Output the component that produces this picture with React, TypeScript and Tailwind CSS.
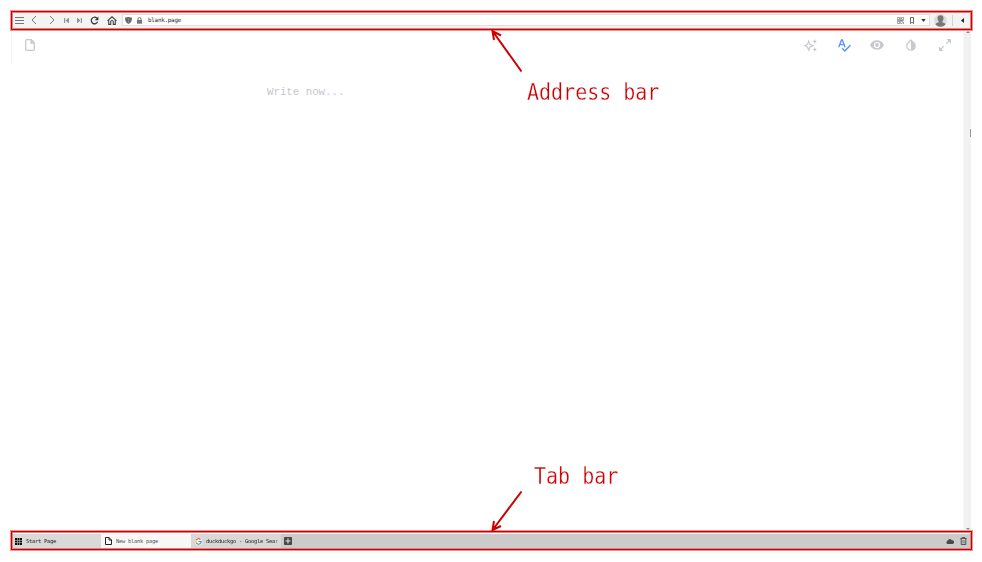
import type { ReactNode } from "react";

const mono = "font-['DejaVu_Sans_Mono',monospace]";

function Icon({ w, h, box, className = "", children }: { w: number; h: number; box: string; className?: string; children: ReactNode }) {
  return (
    <svg width={w} height={h} viewBox={box} className={`block shrink-0 ${className}`} fill="none" stroke="currentColor">
      {children}
    </svg>
  );
}

function Frame({ children, className = "" }: { children: ReactNode; className?: string }) {
  return (
    <div className={`h-[21px] w-[963px] shrink-0 border border-[#ee9292] ${className}`}>
      <div className="h-full border border-[#cc0000]">
        <div className="flex h-full items-stretch border border-[#e08080]">{children}</div>
      </div>
    </div>
  );
}

function AddressBar() {
  return (
    <Frame className="bg-[#f3f3f3]">
      <div className="flex w-[109px] shrink-0 items-center pb-px pl-[2px] text-[#777]">
        <Icon w={9} h={8} box="0 0 9 8" className="text-[#777]"><path d="M0 1.500h9M0 4.500h9M0 7.500h9" strokeWidth="1.200" /></Icon>
        <Icon w={6} h={10} box="0 0 6 10" className="ml-[7px]"><path d="M5 1L1 5l4 4" /></Icon>
        <Icon w={6} h={10} box="0 0 6 10" className="ml-[12px]"><path d="M1 1l4 4-4 4" /></Icon>
        <Icon w={5} h={7} box="0 0 6 7" className="ml-[9px] text-[#8c8c8c]"><path d="M.8.5v6" strokeWidth="1.300" /><path d="M5.500.5v6L2 3.500z" fill="currentColor" stroke="none" /><path d="M5.300.5v6" /></Icon>
        <Icon w={5} h={7} box="0 0 6 7" className="ml-[8px] text-[#8c8c8c]"><path d="M5.200.5v6" strokeWidth="1.300" /><path d="M.5.5v6L4 3.500z" fill="currentColor" stroke="none" /><path d="M.7.5v6" /></Icon>
        <Icon w={9} h={9} box="0 0 9 9" className="ml-[8px] text-[#333]"><path d="M6.800 2.100A3.300 3.300 0 1 0 7.600 5.800" strokeWidth="1.200" /><path d="M8.400.5v3.700H4.700z" fill="currentColor" stroke="none" /></Icon>
        <Icon w={10} h={9} box="0 0 10 9" className="ml-[8px] text-[#444]"><path d="M.5 4.800L5 .8l4.500 4M1.700 4v4.400h2V5.800a1.300 1.300 0 0 1 2.600 0v2.600h2V4" strokeWidth="1.100" /></Icon>
      </div>
      <div className="mt-px mb-[2px] flex w-[808px] shrink-0 items-center border border-[#dedede] bg-white pl-[2px]">
        <Icon w={7} h={7} box="0 0 7 7" className="text-[#686868]"><path d="M0 .5C2 .5 2.700 0 3.500 0S5 .5 7 .5C7 4 6 6 3.500 7 1 6 0 4 0 .5z" fill="currentColor" stroke="none" /><path d="M3.500 1v5" stroke="#999" strokeWidth=".6" /></Icon>
        <Icon w={5} h={7} box="0 0 5 7" className="ml-[5px] text-[#777]"><path d="M1 3V2a1.500 1.500 0 0 1 3 0v1" /><path d="M0 3h5v3.700H0z" fill="currentColor" stroke="none" /></Icon>
        <span className={`${mono} ml-[6px] pt-[2px] text-[5.800px] leading-none tracking-[-0.190px] whitespace-pre text-[#222]`}>blank.page</span>
        <Icon w={7} h={7} box="0 0 7 7" className="ml-auto text-[#666]"><path d="M.5.5h2v2h-2zM4.500.5h2v2h-2zM.5 4.500h2v2h-2zM4 4h1.300v1.300H6.500V7M4 6.500h1.300M3.400.2v6.500M0 3.500h7" strokeWidth=".6" /></Icon>
        <Icon w={4} h={7} box="0 0 4 7" className="ml-[6px] text-[#444]"><path d="M.5.5h3v6L2 5.200.5 6.500z" strokeWidth=".8" /></Icon>
        <Icon w={5} h={3} box="0 0 5 3" className="mr-[3px] ml-[7px] text-[#333]"><path d="M.3 0h4.400L2.500 3z" fill="currentColor" stroke="none" /></Icon>
      </div>
      <div className="flex grow items-center pb-px pl-[4px]">
        <Icon w={13} h={13} box="0 0 13 13" className="text-[#777]"><circle cx="6.500" cy="6.500" r="6.500" fill="#dcdcdc" stroke="none" /><path d="M6.500 1.300c2 0 3 1.200 3 3S8.600 7.300 8 7.800c0 1 3.200 1 3.500 2.600A6.500 6.500 0 0 1 1.500 10.400C1.800 8.800 5 8.800 5 7.800c-.6-.5-1.500-1.700-1.500-3.500s1-3 3-3z" fill="currentColor" stroke="none" /></Icon>
        <div className="ml-[5px] h-[11px] w-px bg-[#d2d2d2]" />
        <Icon w={3} h={5} box="0 0 3 5" className="ml-[8px] text-[#222]"><path d="M3 0v5L0 2.500z" fill="currentColor" stroke="none" /></Icon>
      </div>
    </Frame>
  );
}

function PageTools() {
  return (
    <div className="h-[33px] border-l border-[#f5f5f5]">
      <div className="flex h-[28px] items-center text-[#c8c8d0]">
        <Icon w={10} h={12} box="0 0 10 12" className="ml-[13px]"><path d="M1.500.7h4.800l3 3v6.800q0 .8-.8.8h-7q-.8 0-.8-.8v-9q0-.8.800-.8zM6 .7v3.300h3.300" strokeWidth="1.300" /></Icon>
        <Icon w={13} h={13} box="0 0 13 13" className="ml-[769px]"><path d="M4.700 2.200L6 5.400l3.200 1.300L6 8l-1.300 3.200L3.400 8 .8 6.700l2.600-1.300z" strokeWidth="1.200" /><path d="M10.800 0l.7 1.800 1.500.7-1.500.7-.7 1.800-.7-1.800-1.600-.7 1.600-.7zM10.800 8l.7 1.800 1.500.7-1.500.7-.7 1.800-.7-1.800-1.600-.7 1.600-.7z" fill="currentColor" stroke="none" /></Icon>
        <Icon w={13} h={13} box="0 0 13 13" className="ml-[21px] text-[#5492ee]"><path d="M.7 8.200L3.500 1h.8l2.800 7.200M1.700 5.700h4.500" strokeWidth="1.300" /><path d="M4.200 9.300L6.800 12l5.600-5.800" strokeWidth="1.400" /></Icon>
        <Icon w={14} h={10} box="0 0 14 10" className="ml-[19px]"><path fillRule="evenodd" d="M7 .2c3.200 0 5.800 2 7 4.800-1.200 2.800-3.800 4.800-7 4.800S1.200 7.800 0 5C1.200 2.200 3.800.2 7 .2zm0 1.700a3.100 3.100 0 1 0 0 6.200 3.100 3.100 0 0 0 0-6.200zm0 1.200a1.900 1.900 0 1 1 0 3.800 1.900 1.900 0 0 1 0-3.800z" fill="currentColor" stroke="none" /></Icon>
        <Icon w={10} h={12} box="0 0 10 12" className="ml-[22px]"><path d="M5 1L2 4a4.250 4.250 0 1 0 6 0z" strokeWidth="1.200" /><path d="M5 1v10.200A4.250 4.250 0 0 0 8 4z" fill="currentColor" stroke="none" /></Icon>
        <Icon w={12} h={12} box="0 0 12 12" className="ml-[23px]"><path d="M1 11l3.800-3.800M7.200 4.800L11 1" strokeWidth="1.200" /><path d="M7.500 0H12v4.500zM0 7.500V12h4.500z" fill="currentColor" stroke="none" /></Icon>
      </div>
    </div>
  );
}

function TabBar() {
  const label = `${mono} pt-px text-[5.400px] leading-[7px] tracking-[-0.240px] whitespace-pre`;
  return (
    <Frame className="bg-[#cbcbcb]">
      <div className="flex grow items-center border-t border-white">
        <div className="flex h-full w-[88px] shrink-0 items-center bg-[#d9d9d9] pl-[2px]">
          <Icon w={7} h={7} box="0 0 7 7"><path d="M0 0h2v2H0zM2.500 0h2v2h-2zM5 0h2v2H5zM0 2.500h2v2H0zM2.500 2.500h2v2h-2zM5 2.500h2v2H5zM0 5h2v2H0zM2.500 5h2v2h-2zM5 5h2v2H5z" fill="#111" stroke="none" /></Icon>
          <span className={`${label} ml-[4px] text-[#222]`}>Start Page</span>
        </div>
        <div className="flex h-full w-[90px] shrink-0 items-center bg-[#f7f7f7] pl-[4px]">
          <Icon w={7} h={8} box="0 0 7 8" className="text-[#222]"><path d="M.5.5h3.500l2.500 2.500v4.500h-6zM4 .5V3h2.500" /></Icon>
          <span className={`${label} ml-[4px] text-[#555]`}>New blank page</span>
        </div>
        <div className="flex h-full w-[90px] shrink-0 items-center bg-[#d8d8d8] pl-[4px]">
          <Icon w={7} h={7} box="0 0 8 8" className="rounded-full bg-white"><path d="M6.300 1.700A3.100 3.100 0 0 0 1.300 2.600" stroke="#ea4335" strokeWidth="1.300" /><path d="M1.300 2.600a3.100 3.100 0 0 0 0 2.800" stroke="#fbbc05" strokeWidth="1.300" /><path d="M1.300 5.400A3.100 3.100 0 0 0 6 6.400" stroke="#34a853" strokeWidth="1.300" /><path d="M6 6.400A3.100 3.100 0 0 0 7.100 4H4" stroke="#4285f4" strokeWidth="1.300" /></Icon>
          <span className={`${label} ml-[4px] text-[#222] [mask-image:linear-gradient(to_right,black_95%,#0006)]`}>duckduckgo - Google Sear</span>
        </div>
        <Icon w={8} h={8} box="0 0 8 8" className="ml-[3px]"><rect width="8" height="8" rx="1" fill="#484848" stroke="none" /><path d="M4 1.500v5M1.500 4h5" stroke="#ddd" strokeWidth="1.200" /></Icon>
        <Icon w={8} h={5} box="0 0 8 5" className="ml-auto text-[#4b4b4b]"><path d="M1.500 5A1.500 1.500 0 0 1 1.200 2.200 2.500 2.500 0 0 1 5.800 1.300 1.800 1.800 0 0 1 6.600 5z" fill="currentColor" stroke="none" /></Icon>
        <Icon w={7} h={8} box="0 0 7 8" className="mr-[3px] ml-[6px] text-[#555]"><path d="M.3 1.500h6.400M2.200 1V.5h2.600V1M1.200 2v5.500h4.600V2" /><path d="M2.800 3v3.500M4.200 3v3.500" strokeWidth=".6" /></Icon>
      </div>
    </Frame>
  );
}

export default function App() {
  const caption = `${mono} absolute origin-left scale-x-[.869] text-[23px] leading-[26px] whitespace-pre text-[#cc0000] [-webkit-text-stroke:0.3px_white]`;
  return (
    <div className="relative h-[562px] w-[982px] overflow-hidden bg-white">
      <div className="flex h-full flex-col pt-[10px] pl-[10px]">
        <AddressBar />
        <main className="flex h-[499px] w-[961px] shrink-0">
          <div className="w-[953px] shrink-0 pl-px">
            <PageTools />
            <p className="mt-[21px] ml-[256px] font-['Liberation_Mono',monospace] text-[10.750px] leading-[14px] whitespace-pre text-[#c6c6ce]">Write now...</p>
          </div>
          <div className="flex grow flex-col items-center justify-between border-l border-[#f7f7f7] bg-[#f1f1f1]">
            <Icon w={4} h={2} box="0 0 4 2"><path d="M0 2h4L2 0z" fill="#888" stroke="none" /></Icon>
            <div className="mb-[295px] h-[8px] w-px self-end bg-[#999]" />
            <Icon w={4} h={2} box="0 0 4 2"><path d="M0 0h4L2 2z" fill="#888" stroke="none" /></Icon>
          </div>
        </main>
        <TabBar />
      </div>
      <svg className="pointer-events-none absolute inset-0" width="982" height="562" fill="none" stroke="#cc0000" strokeWidth="2">
        <path d="M521.500 71.500L492.500 31M494 40l-1.500-9 8.500 4.500" />
        <path d="M521.500 491.500L492.500 530M494 521l-1.500 9 8.500-4" />
      </svg>
      <div className={`${caption} top-[79px] left-[527px]`}>Address bar</div>
      <div className={`${caption} top-[463px] left-[534px]`}>Tab bar</div>
    </div>
  );
}
